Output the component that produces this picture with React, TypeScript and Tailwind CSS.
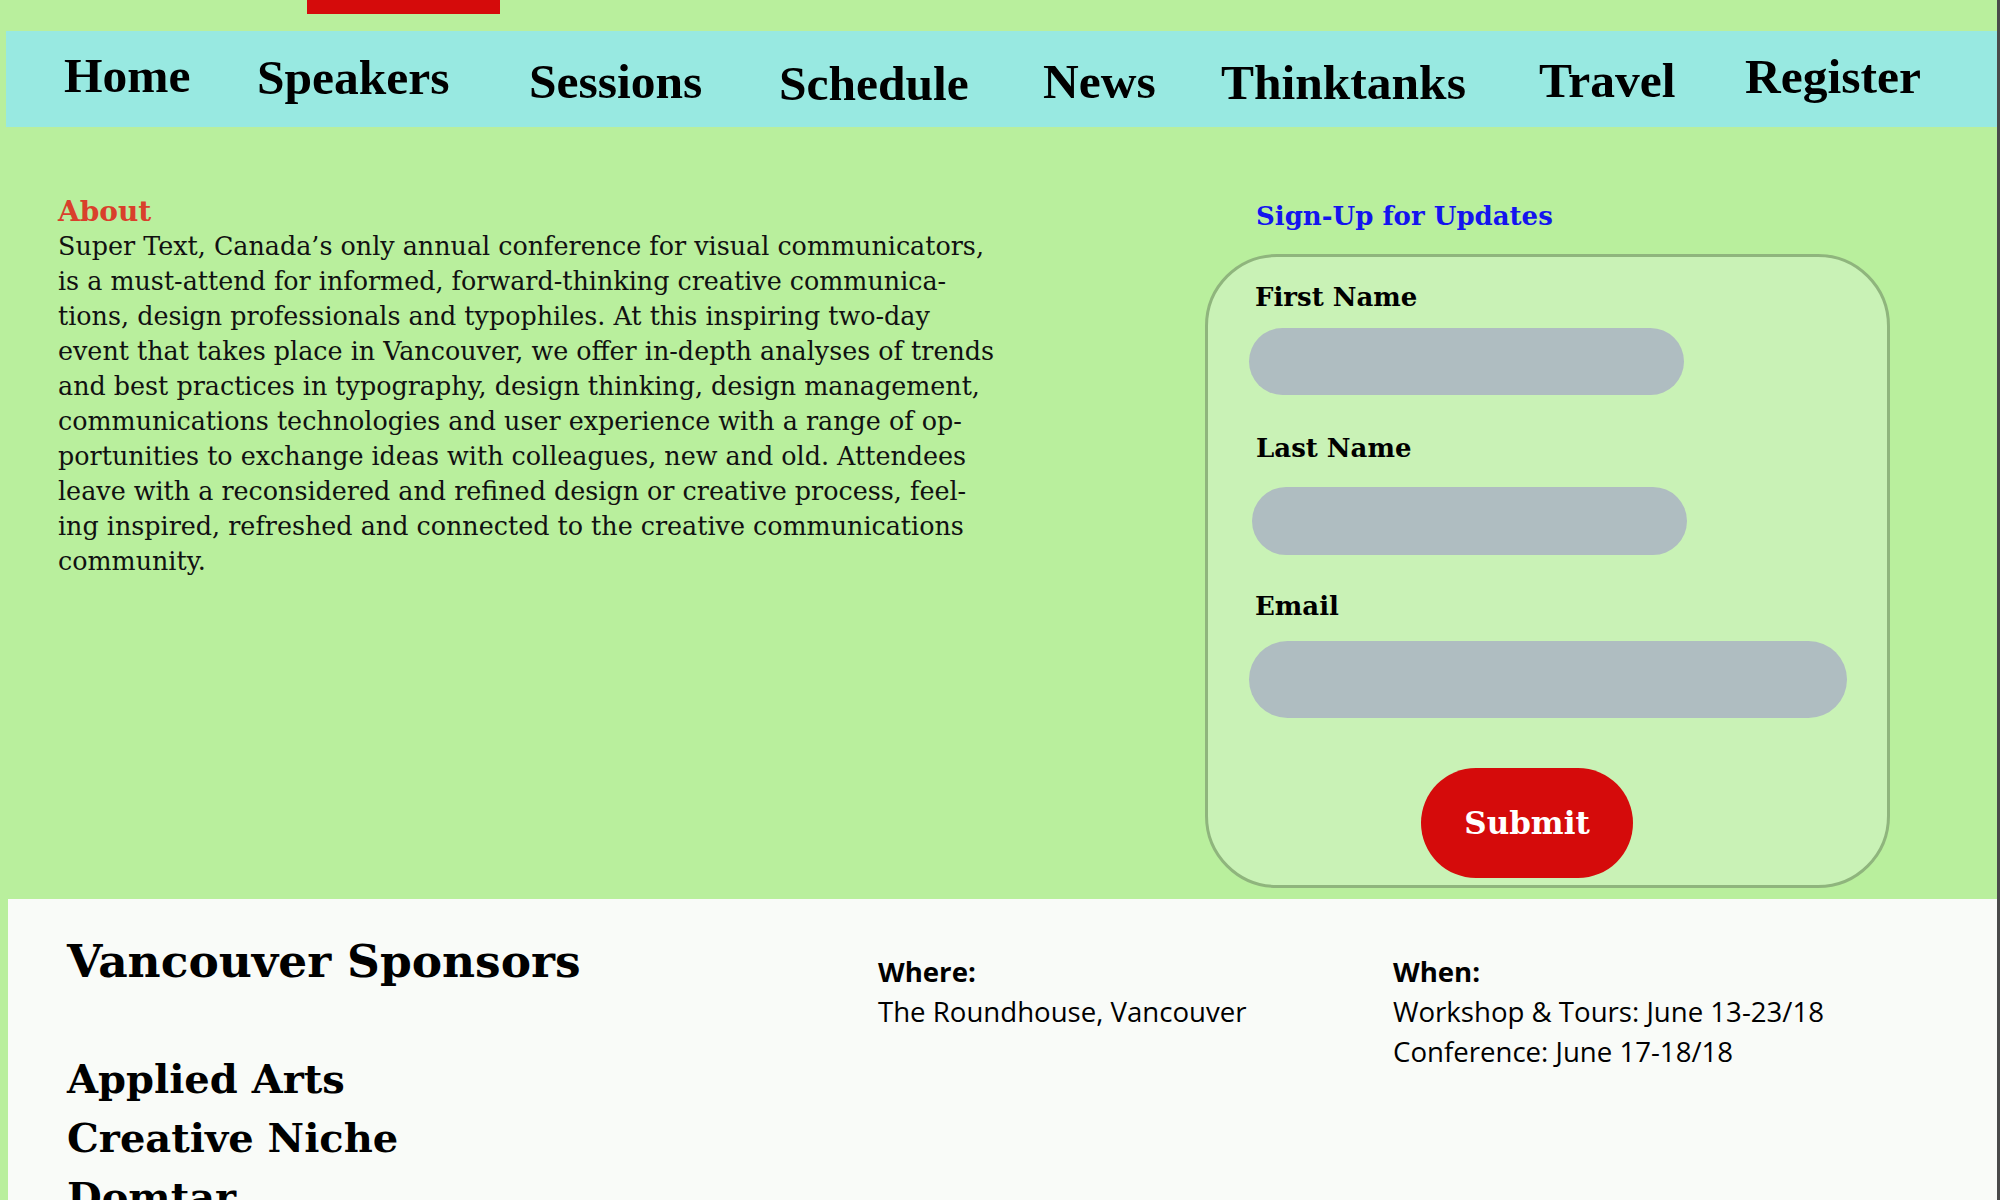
import React from "react";

const serif = "font-['DejaVu_Serif',serif]";

const navItems: { label: string; w: string; mt: string }[] = [
  { label: "Home", w: "w-[193px]", mt: "mt-[0px]" },
  { label: "Speakers", w: "w-[272px]", mt: "mt-[2px]" },
  { label: "Sessions", w: "w-[250px]", mt: "mt-[6px]" },
  { label: "Schedule", w: "w-[264px]", mt: "mt-[8px]" },
  { label: "News", w: "w-[178px]", mt: "mt-[6px]" },
  { label: "Thinktanks", w: "w-[318px]", mt: "mt-[7px]" },
  { label: "Travel", w: "w-[206px]", mt: "mt-[5px]" },
  { label: "Register", w: "w-[200px]", mt: "mt-[1px]" },
];

const aboutLines = [
  "Super Text, Canada’s only annual conference for visual communicators,",
  "is a must-attend for informed, forward-thinking creative communica-",
  "tions, design professionals and typophiles. At this inspiring two-day",
  "event that takes place in Vancouver, we offer in-depth analyses of trends",
  "and best practices in typography, design thinking, design management,",
  "communications technologies and user experience with a range of op-",
  "portunities to exchange ideas with colleagues, new and old. Attendees",
  "leave with a reconsidered and refined design or creative process, feel-",
  "ing inspired, refreshed and connected to the creative communications",
  "community.",
];

export default function App() {
  return (
    <div className="flex h-[1200px] w-[2000px] overflow-hidden bg-[#b9ef9d]">
      <div className="flex w-[1997px] shrink-0 flex-col">
        {/* red tab */}
        <div className="ml-[307px] h-[14px] w-[193px] shrink-0 bg-[#d50b0b]" />

        {/* nav */}
        <nav className="ml-[6px] mt-[17px] flex h-[96px] shrink-0 items-start bg-[#98e9e1] pl-[58px] pt-[20px] font-['Liberation_Serif',serif]">
          {navItems.map((n) => (
            <div key={n.label} className={`${n.w} ${n.mt} shrink-0`}>
              <span className="whitespace-nowrap text-[49.5px] font-bold leading-[49px] text-black">{n.label}</span>
            </div>
          ))}
        </nav>

        {/* middle */}
        <div className="flex shrink-0">
          <div className={`w-[1205px] shrink-0 pl-[58px] pt-[67px] ${serif}`}>
            <h2 className="text-[28px] font-bold leading-[35px] text-[#d9402b]">About</h2>
            <div className="text-[25.4px] leading-[35px] text-[#111]">
              {aboutLines.map((l) => (
                <div key={l} className="whitespace-nowrap">{l}</div>
              ))}
            </div>
          </div>

          <div className={`pt-[72px] ${serif}`}>
            <h3 className="ml-[51px] text-[26px] font-bold leading-[34px] text-[#1414ee]">Sign-Up for Updates</h3>
            <form
              className="mt-[21px] flex h-[634px] w-[685px] flex-col rounded-[72px] border-[3px] border-[#8fb57d] bg-[#c9f2b6] pl-[41px] pt-[23px]"
              onSubmit={(e) => e.preventDefault()}
            >
              <label className="ml-[6px] text-[26px] font-bold leading-[34px] text-black">First Name</label>
              <div className="mt-[14px] h-[67px] w-[435px] rounded-full bg-[#afbdc1]" />
              <label className="ml-[7px] mt-[36px] text-[26px] font-bold leading-[34px] text-black">Last Name</label>
              <div className="ml-[3px] mt-[22px] h-[68px] w-[435px] rounded-full bg-[#afbdc1]" />
              <label className="ml-[6px] mt-[34px] text-[26px] font-bold leading-[34px] text-black">Email</label>
              <div className="mt-[18px] h-[77px] w-[598px] rounded-full bg-[#afbdc1]" />
              <button
                type="submit"
                className="ml-[172px] mt-[50px] flex h-[110px] w-[212px] items-center justify-center rounded-full bg-[#d50b0b] text-[31px] font-bold leading-none text-white"
              >
                Submit
              </button>
            </form>
          </div>
        </div>

        {/* footer */}
        <footer className="ml-[8px] mt-[11px] flex flex-1 bg-[#f9fbf8]">
          <div className={`w-[870px] shrink-0 pl-[59px] pt-[32px] ${serif}`}>
            <h2 className="text-[45.5px] font-bold leading-[60px] text-black">Vancouver Sponsors</h2>
            <ul className="mt-[58px] text-[40px] font-bold leading-[59px] text-black">
              <li>Applied Arts</li>
              <li>Creative Niche</li>
              <li>Domtar</li>
            </ul>
          </div>
          <div className="w-[515px] shrink-0 pt-[52px] font-['Open_Sans',sans-serif] text-[27.6px] leading-[40px] text-black">
            <div className="font-bold">Where:</div>
            <div>The Roundhouse, Vancouver</div>
          </div>
          <div className="pt-[52px] font-['Open_Sans',sans-serif] text-[27.6px] leading-[40px] text-black">
            <div className="font-bold">When:</div>
            <div>Workshop &amp; Tours: June 13-23/18</div>
            <div>Conference: June 17-18/18</div>
          </div>
        </footer>
      </div>
      <div className="w-[3px] shrink-0 bg-[#4a4a4a]" />
    </div>
  );
}
